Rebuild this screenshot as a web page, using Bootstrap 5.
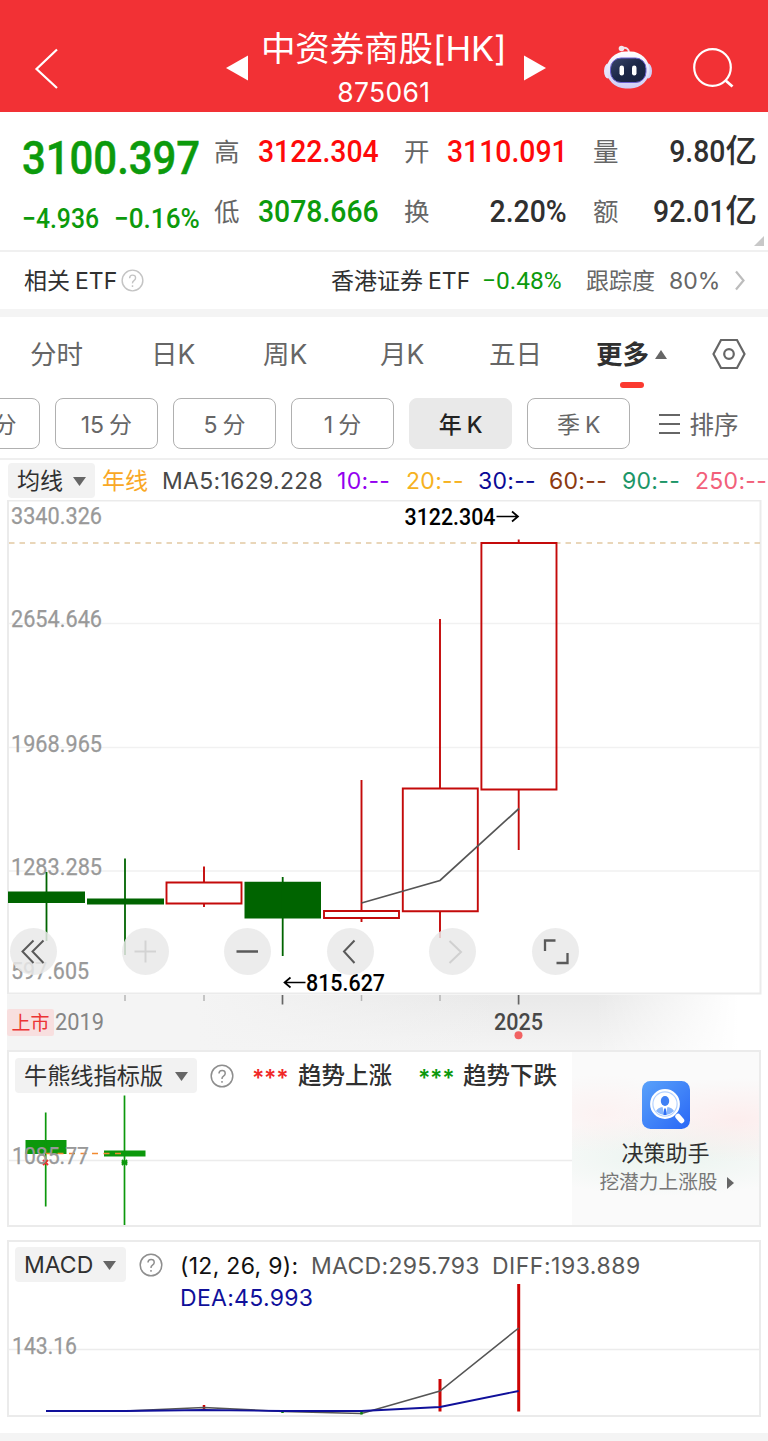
<!DOCTYPE html>
<html lang="zh-CN">
<head>
<meta charset="utf-8">
<meta name="viewport" content="width=device-width, initial-scale=1">
<title>中资券商股[HK] 875061</title>
<link href="https://cdn.jsdelivr.net/npm/bootstrap@5.3.0/dist/css/bootstrap.min.css" rel="stylesheet">
<style>
body{font-family:Inter,"Noto Sans CJK SC",sans-serif;background:#fff;color:#303030;font-size:23px;line-height:1;overflow-x:hidden}
svg{display:block;flex:none}
.num{font-family:Roboto,"Noto Sans CJK SC",sans-serif}
.g{display:grid;align-items:center;white-space:nowrap}
.topbar{height:112px;background:#f23135;color:#fff;grid-template-columns:226px 22px 275.5px 80.5px 88px 1fr}
.topbar h1{font-size:34.5px;font-weight:400;line-height:44px;margin:27px 0 0;letter-spacing:-.1px}
.topbar small{font-size:26.5px;line-height:30px;letter-spacing:.3px}
.quote{height:140px;grid-template-columns:22px 192px 44px 120px 26px 43px 120px 26px 51px 113px;grid-template-rows:60px 60px;padding-top:9px;border-bottom:2px solid #f0f0f0;position:relative}
.quote .lbl{font-size:25.5px;color:#666;padding-top:4px}
.quote .val{font-size:31.5px;font-weight:500;padding-top:1px}
.slim{display:inline-block;transform:scaleX(.9);transform-origin:left}
.text-end .slim{transform-origin:right}
.price{font-size:46.5px;font-weight:500;-webkit-text-stroke:.5px}
.chg{font-size:27.5px;font-weight:500}
.chg .slim{width:92px}
.dn{color:#0c9a0c}.up{color:#fe0a0a}
.corner{position:absolute;right:4px;bottom:4px}
.etf{height:57px;grid-template-columns:24px 97px 210px 151px 104px 83px 66px 1fr}
.etf>span{padding-top:2px}
.band{height:8px;background:#f4f4f4}
.tabs{height:81px;grid-template-columns:30px 121px 112px 117px 109px 107px 116px 1fr;font-size:26.5px;color:#666;padding-bottom:8px}
.tabs>span{padding-top:2px}
.tabs .on{font-weight:700;color:#303030;position:relative}
.tabs .on::after{content:"";position:absolute;left:24px;top:43px;width:24px;height:6px;border-radius:3px;background:#fb3a30}
.pills{height:62px;gap:15.6px;margin-left:-63px;border-bottom:2px solid #efefef;color:#666}
.pill{width:102.5px;height:51px;border:1.5px solid #b0b0b0;border-radius:8px;flex:none;padding-top:3px}
.pill.on{background:#e9e9e9;border-color:#e9e9e9;color:#222;font-weight:500}
.sp{margin-left:5px}
.ma{height:40px;grid-template-columns:8px 94px 60px 175px 69px 72px 71px 73px 73px 1fr;color:#484848;letter-spacing:.3px}
.ma>span:not(.chip){padding-top:2px}
.chip{background:#f2f2f2;border-radius:4px;height:35px;color:#303030;padding-left:9px;padding-top:2px}
.chart{position:relative;height:550px}
.ctl{position:absolute;left:10px;top:428px}
.ctl span{width:47px;height:47px;border-radius:50%;background:rgba(233,233,233,.85);margin-right:55.4px;display:flex}
.pane{margin:0 7px;border:2px solid #ebebeb;height:177px;position:relative;overflow:hidden}
.plot{position:absolute;left:-2px;top:-2px}
.legend{position:relative;padding-top:6px}
.stars{font-weight:600;letter-spacing:-.3px;padding-top:6px}
.trend{font-size:23.5px;font-weight:500;padding-top:1px}
.helper{position:absolute;right:0;top:0;width:187px;height:173px;color:#303030;background:
 radial-gradient(ellipse 80px 40px at 30px 62px,rgba(255,230,230,.4),transparent),
 radial-gradient(ellipse 120px 42px at 165px 68px,rgba(255,225,225,.5),transparent),
 radial-gradient(ellipse 150px 40px at 95px 104px,rgba(224,240,232,.6),transparent),#fafafa}
</style>
</head>
<body>
<header class="topbar g">
 <svg class="ms-4 ps-2" width="66" height="44" viewBox="0 0 58 44" style="margin-top:24px"><path d="M25 3.5 4.500 23 25 42" fill="none" stroke="#fff" stroke-width="2.2"/></svg>
 <svg width="22" height="26" style="margin-top:24px"><path d="M0 13 22 .5V25.500z" fill="#fff"/></svg>
 <div class="text-center align-self-start" style="padding-right:4px"><h1>中资券商股[HK]</h1><small class="d-block" style="margin-top:6px">875061</small></div>
 <svg width="22" height="26" style="margin-top:24px"><path d="M22 13 0 .5V25.500z" fill="#fff"/></svg>
 <svg width="48" height="46" viewBox="604 44 48 46" style="margin-top:22px">
  <defs><linearGradient id="hd" x2="0" y2="1"><stop stop-color="#fff"/><stop offset="1" stop-color="#cfcdf5"/></linearGradient><linearGradient id="vs" x2="1" y2="1"><stop stop-color="#39466a"/><stop offset=".5" stop-color="#1c2747"/><stop offset="1" stop-color="#18213e"/></linearGradient></defs>
  <path d="M622 48q7-1 7 5" fill="none" stroke="#f3dfe8" stroke-width="2"/><circle cx="621.500" cy="48.500" r="2.800" fill="#f2e6ee"/>
  <ellipse cx="608" cy="71" rx="4" ry="7.500" fill="#e6e4fb"/><ellipse cx="648" cy="71" rx="4" ry="7.500" fill="#d0cff6"/>
  <rect x="606.500" y="51.500" width="43" height="37" rx="19" fill="url(#hd)"/>
  <rect x="610.500" y="58" width="35.500" height="24.500" rx="10.500" fill="url(#vs)" stroke="#6a60d0" stroke-width="1"/>
  <rect x="619.500" y="65.500" width="4.500" height="10" rx="2.200" fill="#fff"/><rect x="632" y="65.500" width="4.500" height="10" rx="2.200" fill="#fff"/>
 </svg>
 <svg width="42" height="42" viewBox="691 47 42 42" style="margin-top:24px"><g fill="none" stroke="#fff" stroke-width="2.200"><circle cx="711.500" cy="67.500" r="18.300"/><path d="m724 80 7.500 6.500" stroke-width="2.800"/></g></svg>
</header>

<section class="quote g num">
 <span></span><span class="price dn" style="padding-top:14px"><span class="slim">3100.397</span></span><span class="lbl">高</span><span class="val up"><span class="slim">3122.304</span></span><span></span><span class="lbl">开</span><span class="val up"><span class="slim">3110.091</span></span><span></span><span class="lbl">量</span><span class="val text-end"><span class="slim">9.80</span>亿</span>
 <span></span><span class="chg dn" style="padding-top:16px"><span class="slim">−4.936</span><span class="slim" style="transform:scaleX(.95)">−0.16%</span></span><span class="lbl">低</span><span class="val dn"><span class="slim">3078.666</span></span><span></span><span class="lbl">换</span><span class="val text-end"><span class="slim">2.20%</span></span><span></span><span class="lbl">额</span><span class="val text-end"><span class="slim">92.01</span>亿</span>
 <svg class="corner" width="10" height="10"><path d="M10 0V10H0z" fill="#c8c8c8"/></svg>
</section>

<section class="etf g">
 <span></span><span>相关<span class="sp">ETF</span></span>
 <svg width="23" height="23" viewBox="0 0 24 24" fill="none" stroke="#c4c4c4" stroke-width="1.500"><circle cx="12" cy="12" r="10.800"/><path d="M9 9.600q0-3.200 3.100-3.200T15.200 9.400q0 1.600-1.700 2.700T12 15M12 17v1.800"/></svg>
 <span>香港证券<span class="sp">ETF</span></span><span class="num dn" style="font-size:24.5px;padding-top:1px">−0.48%</span><span style="color:#666">跟踪度</span><span style="color:#666">80%</span>
 <svg width="10" height="21"><path d="M1 1.500 8.500 10.500 1 19.500" fill="none" stroke="#bcbcbc" stroke-width="2.200"/></svg>
</section>
<div class="band"></div>

<nav class="tabs g">
 <span></span><span>分时</span><span>日K</span><span>周K</span><span>月K</span><span>五日</span>
 <span class="on d-flex align-items-center">更多<svg style="margin-left:6px" width="12" height="10"><path d="M6 0 12 9H0z" fill="#666"/></svg></span>
 <svg width="34" height="32" fill="none" stroke="#666" stroke-width="2.200"><path d="M9 2H25L32.500 16 25 30H9L1.500 16z"/><circle cx="17" cy="16" r="4.800"/></svg>
</nav>
<div class="pills d-flex">
 <div class="pill d-flex align-items-center justify-content-center">30<span class="sp">分</span></div>
 <div class="pill d-flex align-items-center justify-content-center">15<span class="sp">分</span></div>
 <div class="pill d-flex align-items-center justify-content-center">5<span class="sp">分</span></div>
 <div class="pill d-flex align-items-center justify-content-center">1<span class="sp">分</span></div>
 <div class="pill on d-flex align-items-center justify-content-center">年<span class="sp">K</span></div>
 <div class="pill d-flex align-items-center justify-content-center">季<span class="sp">K</span></div>
 <div class="d-flex align-items-center" style="height:51px;font-size:24.5px;margin-left:13px"><svg width="31" height="20" class="flex-shrink-0"><path d="M0 1H21M0 10H21M0 19H21" stroke="#666" stroke-width="1.800"/></svg><span class="text-nowrap" style="padding-top:3px">排序</span></div>
</div>

<div class="ma g">
 <span></span><span class="chip d-flex align-items-center" style="width:87px;letter-spacing:0">均线<svg width="13" height="9" style="margin-left:10px"><path d="M0 0H13L6.500 9z" fill="#666"/></svg></span>
 <span style="color:#f9a825;letter-spacing:0">年线</span><span>MA5:1629.228</span><span style="color:#9400f0">10:--</span><span style="color:#f6b221">20:--</span><span style="color:#0a0a96">30:--</span><span style="color:#8c3a10">60:--</span><span style="color:#1c9668">90:--</span><span style="color:#f2607a">250:--</span>
</div>

<section class="chart">
<svg width="768" height="551" viewBox="0 500 768 551">
 <defs>
  <linearGradient id="axh"><stop offset=".78" stop-color="#fff" stop-opacity="0"/><stop offset=".97" stop-color="#fff"/></linearGradient>
  <linearGradient id="axv" x2="0" y2="1"><stop stop-color="#e9e9e9"/><stop offset="1" stop-color="#f4f4f4"/></linearGradient>
  <linearGradient id="axl"><stop stop-color="#f4f4f4"/><stop offset=".25" stop-color="#f4f4f4"/><stop offset=".65" stop-color="#f4f4f4" stop-opacity="0"/></linearGradient>
 </defs>
 <rect x="7" y="995" width="754" height="55" fill="url(#axv)"/><rect x="7" y="995" width="754" height="55" fill="url(#axl)"/><rect x="7" y="995" width="754" height="56" fill="url(#axh)"/>
 <rect x="8" y="500.500" width="752.500" height="493" fill="#fff" stroke="#ebebeb" stroke-width="2"/>
 <path d="M9 623.500H760M9 747.500H760M9 871H760" stroke="#f1f1f1" stroke-width="1.500"/>
 <path d="M9 543H760" stroke="#e2c9a2" stroke-width="1.300" stroke-dasharray="5.500 5"/>
 <g class="num" font-size="24" fill="#999" stroke="#999" stroke-width=".25">
  <text x="11" y="523.500" textLength="91" lengthAdjust="spacingAndGlyphs">3340.326</text><text x="11" y="627" textLength="91" lengthAdjust="spacingAndGlyphs">2654.646</text><text x="11" y="751.500" textLength="91" lengthAdjust="spacingAndGlyphs">1968.965</text><text x="11" y="874.500" textLength="91" lengthAdjust="spacingAndGlyphs">1283.285</text><text x="11" y="978.500" textLength="78" lengthAdjust="spacingAndGlyphs">597.605</text>
 </g>
 <g fill="#006400"><path d="M8 891.500H85V903H8zM87 898.500H164V904.500H87zM244.500 881.800H321V918.500H244.500z"/><path d="M46.500 872V941M125 858.500V955M282.700 877V956" stroke="#006400" stroke-width="1.800"/></g>
 <g fill="none" stroke="#c40a0a" stroke-width="1.900"><path d="M166.500 882.500H241.500V903.500H166.500zM324 911H399V918H324zM402.800 788.500H477.800V911.300H402.800zM481.400 543H556.500V789.500H481.400z"/><path d="M204 866.500V882M204 904V907M361.500 780V911M361.500 918V922M440 619V788M440 911V938M518.700 539.500V543M518.700 790V850"/></g>
 <path d="M361.500 903 440 880.500 519 808.500" fill="none" stroke="#555" stroke-width="1.700"/>
 <g class="num" font-size="24" font-weight="500" fill="#000"><text x="404.500" y="524.500" textLength="91" lengthAdjust="spacingAndGlyphs">3122.304</text><text x="306" y="990.500" textLength="79" lengthAdjust="spacingAndGlyphs">815.627</text></g>
 <path d="M496.500 516.500H518M512 511.500 518 516.500 512 521.500M305.500 982.500H284.500M290.500 977.500 284.500 982.500 290.500 987.500" fill="none" stroke="#000" stroke-width="1.700"/>
 <path d="M125 995V1001M204 995V1001M361.500 995V1001M440 995V1001" stroke="#b5b5b5" stroke-width="1.500"/>
 <path d="M282.500 995V1004.500M518.600 995V1004.500" stroke="#666" stroke-width="1.700"/>
 <rect x="7" y="1009" width="47" height="27" rx="2" fill="#f8dfdf"/><text x="11.500" y="1029.500" font-size="19" textLength="38" fill="#ec3434">上市</text>
 <g class="num" font-size="24"><text x="55" y="1030" textLength="49" lengthAdjust="spacingAndGlyphs" fill="#858585">2019</text><text x="494" y="1029.500" textLength="49" lengthAdjust="spacingAndGlyphs" fill="#484848" font-weight="500">2025</text></g>
 <circle cx="518.500" cy="1035.300" r="4" fill="#f16262"/>
</svg>
<div class="ctl d-flex">
 <span style="margin-right:65px"><svg width="47" height="47" fill="none" stroke="#5a5a5a" stroke-width="2"><path d="M23.500 12.500 12.500 23.500 23.500 35M33.500 12.500 22.500 23.500 33.500 35"/></svg></span>
 <span><svg width="47" height="47" stroke="#d3d3d3" stroke-width="2"><path d="M12.500 23.500H34M23.500 12.500V34.500"/></svg></span>
 <span><svg width="47" height="47" stroke="#5a5a5a" stroke-width="2.500"><path d="M12.500 23.500H34"/></svg></span>
 <span><svg width="47" height="47" fill="none" stroke="#5a5a5a" stroke-width="2"><path d="M27.500 12.500 17 23.500 27.500 35"/></svg></span>
 <span><svg width="47" height="47" fill="none" stroke="#d0d0d0" stroke-width="2"><path d="M20.500 13 32 24 20.500 35"/></svg></span>
 <span class="me-0"><svg width="47" height="47" fill="none" stroke="#5a5a5a" stroke-width="2.300"><path d="M13 23V12.500H23.500M35.500 25V35H24.500"/></svg></span>
</div>
</section>

<section class="pane">
 <svg class="plot" width="754" height="177" viewBox="7 1050 754 177">
  <path d="M9 1160.500H760" stroke="#ececec" stroke-width="1.500"/>
  <path d="M25.500 1140H66.500V1154H25.500zM104 1150.500H145.500V1156.500H104z" fill="#0c980c"/><path d="M45.700 1112.500V1206.500M124.500 1095.500V1225" stroke="#0c980c" stroke-width="1.700"/>
  <path d="M46 1153.500H124" stroke="#f28a30" stroke-width="1.600" stroke-dasharray="6 5.500"/>
  <path d="m43 1160 5 5m0-5-5 5" stroke="#f23030" stroke-width="2"/><path d="m122 1160 5 5m0-5-5 5M121.500 1162.500h6" stroke="#0c980c" stroke-width="1.800"/>
  <text class="num" x="12" y="1163.500" font-size="24" textLength="77" lengthAdjust="spacingAndGlyphs" fill="#999" stroke="#999" stroke-width=".25">1085.77</text>
 </svg>
 <div class="legend g" style="grid-template-columns:6px 195px 42px 46px 120px 45px 1fr">
  <span></span><span class="chip d-flex align-items-center" style="width:182px;font-size:23.2px">牛熊线指标版<svg width="13" height="9" style="margin-left:12px"><path d="M0 0H13L6.500 9z" fill="#666"/></svg></span>
  <svg width="24" height="24" viewBox="0 0 24 24" fill="none" stroke="#8e8e8e" stroke-width="1.500"><circle cx="12" cy="12" r="10.800"/><path d="M9 9.600q0-3.200 3.100-3.200T15.200 9.400q0 1.600-1.700 2.700T12 15M12 17v1.800"/></svg>
  <span class="stars" style="color:#f02828">***</span><span class="trend">趋势上涨</span>
  <span class="stars" style="color:#0c980c">***</span><span class="trend">趋势下跌</span>
 </div>
 <aside class="helper text-center">
  <svg style="margin:29px 0 0 69.500px" width="48" height="48" viewBox="0 0 48 48"><defs><linearGradient id="ic" x2="1" y2="1"><stop stop-color="#5aa2fa"/><stop offset="1" stop-color="#2967f6"/></linearGradient></defs><rect width="48" height="48" rx="8.500" fill="url(#ic)"/><circle cx="23" cy="23" r="13.800" fill="#b4d2ff" stroke="#fff" stroke-width="2.200"/><circle cx="23" cy="23" r="11.500" fill="#fff"/><path d="M14 30q2-3.500 6.500-4l2 8q-5-.5-8.500-4M32 30q-2-3.500-6.500-4l-2 8q5-.5 8.500-4" fill="#8ab7fc"/><ellipse cx="23" cy="20" rx="4.200" ry="5" fill="#3f80f5"/><path d="m22.200 27.500h1.600l.7 6.500h-3z" fill="#2f6ff5"/><path d="m36 35.500 3.500 4" stroke="#fff" stroke-width="5.500" stroke-linecap="round"/></svg>
  <div style="font-size:22px;margin-top:13px">决策助手</div>
  <div class="d-flex align-items-center justify-content-center" style="font-size:19.700px;margin-top:9px;color:#777;padding-left:2px">挖潜力上涨股<svg width="7" height="12" style="margin-left:9px"><path d="M0 0 7 6 0 12z" fill="#666"/></svg></div>
 </aside>
</section>

<section class="pane" style="margin-top:13px">
 <svg class="plot" width="754" height="177" viewBox="7 1240 754 177">
  <path d="M9 1349.500H760" stroke="#ececec" stroke-width="1.500"/>
  <text class="num" x="12" y="1353.500" font-size="24" textLength="65" lengthAdjust="spacingAndGlyphs" fill="#999" stroke="#999" stroke-width=".25">143.16</text>
  <path d="M440 1379V1411.500M518.700 1284V1411.500" stroke="#cc0404" stroke-width="3"/><path d="M204 1405V1411" stroke="#cc0404" stroke-width="2.500"/>
  <path d="M46 1411 125 1411 204 1407.500 283 1411.500 361.500 1413.500 440 1391 518.700 1328" fill="none" stroke="#555" stroke-width="1.600"/>
  <path d="M282.500 1410.500v2.500M361.500 1411v3.500" stroke="#0c800c" stroke-width="2.500"/>
  <path d="M46 1411 125 1411 204 1410 283 1411 361.500 1411 440 1407 518.700 1391" fill="none" stroke="#10109a" stroke-width="1.800"/>
 </svg>
 <div class="legend g" style="padding-top:5px;grid-template-columns:6px 124px 41px 131px 181px 1fr;color:#585858;letter-spacing:.3px">
  <span></span><span class="chip d-flex align-items-center" style="width:111px;letter-spacing:0">MACD<svg width="13" height="9" style="margin-left:10px"><path d="M0 0H13L6.500 9z" fill="#666"/></svg></span>
  <svg width="24" height="24" viewBox="0 0 24 24" fill="none" stroke="#8e8e8e" stroke-width="1.500"><circle cx="12" cy="12" r="10.800"/><path d="M9 9.600q0-3.200 3.100-3.200T15.200 9.400q0 1.600-1.700 2.700T12 15M12 17v1.800"/></svg>
  <span style="color:#111;padding-top:4px">(12, 26, 9):</span><span style="padding-top:4px">MACD:295.793</span><span style="padding-top:4px;letter-spacing:.5px">DIFF:193.889</span>
 </div>
 <div class="position-relative" style="margin-left:171px;margin-top:5px;color:#10109a;letter-spacing:.3px">DEA:45.993</div>
</section>
<div class="band" style="margin-top:16px"></div>
<script src="https://cdn.jsdelivr.net/npm/bootstrap@5.3.0/dist/js/bootstrap.bundle.min.js"></script>
</body>
</html>
